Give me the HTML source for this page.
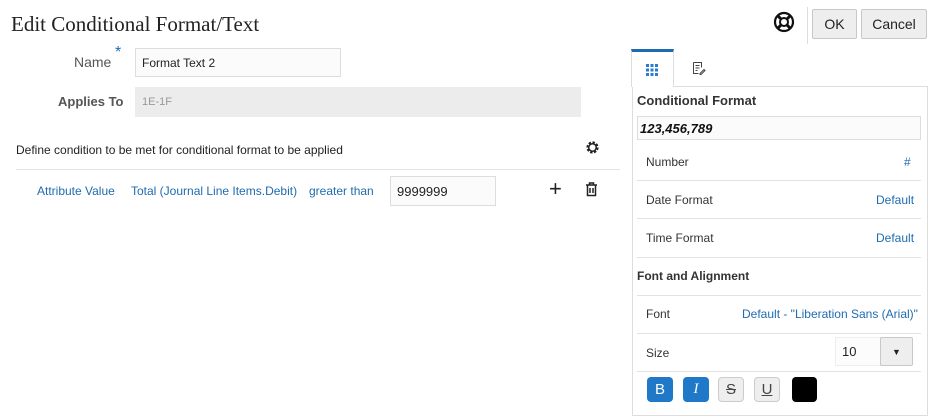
<!DOCTYPE html>
<html><head><style>
body{margin:0;width:931px;height:408px;background:#fff;font-family:"Liberation Sans",sans-serif;position:relative;overflow:hidden;color:#333}
.a{position:absolute}
.t{font-size:12px}
.lk{color:#1f6bb0}
.inp{position:absolute;border:1px solid #ddd;background:#fbfbfb;box-sizing:border-box;font-size:12px;padding-left:6px;display:flex;align-items:center}
.hr{position:absolute;height:1px;background:#e2e2e2}
.btn{position:absolute;border:1px solid #c8c8c8;background:#eee;border-radius:2px;box-sizing:border-box;font-size:14px;display:flex;align-items:center;justify-content:center;color:#222}
.fb{position:absolute;top:377px;width:26px;height:25px;border-radius:4px;box-sizing:border-box;display:flex;align-items:center;justify-content:center;font-size:15px}
</style></head><body>
<div class="a" style="left:11px;top:12px;font-family:'Liberation Serif',serif;font-size:21px;color:#222">Edit Conditional Format/Text</div>
<div class="a t" style="left:74px;top:54px;font-size:14px;color:#555">Name</div>
<div class="a" style="left:115px;top:44px;color:#1f6bb0;font-size:16px">*</div>
<div class="inp" style="left:135px;top:48px;width:206px;height:29px;color:#222">Format Text 2</div>
<div class="a" style="left:58px;top:94px;font-size:13px;font-weight:bold;color:#555">Applies To</div>
<div class="inp" style="left:135px;top:87px;width:446px;height:30px;background:#ececec;border-color:#ececec;color:#999;font-size:11px">1E-1F</div>
<div class="a t" style="left:16px;top:143px;color:#222">Define condition to be met for conditional format to be applied</div>
<svg class="a" style="left:585px;top:140px" width="15" height="15" viewBox="0 0 16 16"><circle cx="8" cy="8" r="5" fill="none" stroke="#222" stroke-width="3" stroke-dasharray="2.4 1.5"/><circle cx="8" cy="8" r="4" fill="none" stroke="#222" stroke-width="1.6"/></svg>
<div class="hr" style="left:16px;top:169px;width:604px"></div>
<div class="a t lk" style="left:37px;top:184px">Attribute Value</div>
<div class="a t lk" style="left:131px;top:184px">Total (Journal Line Items.Debit)</div>
<div class="a t lk" style="left:309px;top:184px">greater than</div>
<div class="inp" style="left:390px;top:176px;width:106px;height:30px;font-size:13px;color:#222">9999999</div>
<div class="a" style="left:549px;top:178px;font-size:22px;color:#222;line-height:22px">+</div>
<svg class="a" style="left:585px;top:182px" width="13" height="15" viewBox="0 0 13 15"><path d="M1 3h11M4.5 3V1h4v2M2.5 3.5v10h8v-10M5 6v5M8 6v5" fill="none" stroke="#222" stroke-width="1.5"/></svg>
<svg class="a" style="left:773px;top:11px" width="22" height="22" viewBox="0 0 22 22"><circle cx="11" cy="11" r="9" fill="none" stroke="#111" stroke-width="2.2"/><circle cx="11" cy="11" r="4" fill="none" stroke="#111" stroke-width="2"/><path d="M5 5l3 3M17 5l-3 3M5 17l3-3M17 17l-3-3" stroke="#111" stroke-width="3"/></svg>
<div class="a" style="left:807px;top:7px;width:1px;height:37px;background:#ddd"></div>
<div class="btn" style="left:812px;top:9px;width:45px;height:30px">OK</div>
<div class="btn" style="left:861px;top:9px;width:66px;height:30px">Cancel</div>
<div class="a" style="left:631px;top:49px;width:43px;height:38px;border:1px solid #ddd;border-top:3px solid #1f6bb0;border-bottom:none;box-sizing:border-box;background:#fff;z-index:2"></div>
<svg class="a" style="left:646px;top:64px;z-index:3" width="12" height="12" viewBox="0 0 12 12" fill="#2a7bd0"><rect x="0" y="0" width="3" height="3"/><rect x="4.5" y="0" width="3" height="3"/><rect x="9" y="0" width="3" height="3"/><rect x="0" y="4.5" width="3" height="3"/><rect x="4.5" y="4.5" width="3" height="3"/><rect x="9" y="4.5" width="3" height="3"/><rect x="0" y="9" width="3" height="3"/><rect x="4.5" y="9" width="3" height="3"/><rect x="9" y="9" width="3" height="3"/></svg>
<svg class="a" style="left:692px;top:61px" width="14" height="14" viewBox="0 0 14 14"><path d="M1.5 1.5h8v5M1.5 1.5v11h5M3.5 4.5h4M3.5 7h4M3.5 9.5h2M8 12.5l4-4 1 1-4 4h-1z" fill="none" stroke="#444" stroke-width="1"/></svg>
<div class="a" style="left:632px;top:86px;width:296px;height:330px;border:1px solid #ddd;box-sizing:border-box"></div>
<div class="a" style="left:637px;top:93px;font-size:13px;font-weight:bold;color:#333">Conditional Format</div>
<div class="inp" style="left:637px;top:116px;width:284px;height:24px;font-weight:bold;font-style:italic;font-size:13px;color:#111;padding-left:2px">123,456,789</div>
<div class="a t" style="left:646px;top:155px">Number</div><div class="a t lk" style="left:904px;top:155px">#</div>
<div class="hr" style="left:637px;top:180px;width:284px"></div>
<div class="a t" style="left:646px;top:193px">Date Format</div><div class="a t lk" style="left:876px;top:193px">Default</div>
<div class="hr" style="left:637px;top:218px;width:284px"></div>
<div class="a t" style="left:646px;top:231px">Time Format</div><div class="a t lk" style="left:876px;top:231px">Default</div>
<div class="hr" style="left:637px;top:257px;width:284px"></div>
<div class="a t" style="left:637px;top:269px;font-weight:bold">Font and Alignment</div>
<div class="hr" style="left:637px;top:295px;width:284px"></div>
<div class="a t" style="left:646px;top:307px">Font</div><div class="a t lk" style="left:742px;top:307px">Default - "Liberation Sans (Arial)"</div>
<div class="hr" style="left:637px;top:333px;width:284px"></div>
<div class="a t" style="left:646px;top:346px">Size</div>
<div class="inp" style="left:835px;top:337px;width:46px;height:29px;font-size:13px;color:#222;border-color:#eee;background:#fcfcfc">10</div>
<div class="btn" style="left:880px;top:337px;width:33px;height:29px;font-size:9px">▼</div>
<div class="hr" style="left:637px;top:371px;width:284px"></div>
<div class="fb" style="left:647px;background:#1f78c8;color:#fff">B</div>
<div class="fb" style="left:683px;background:#1f78c8;color:#fff;font-style:italic;font-family:'Liberation Serif',serif">I</div>
<div class="fb" style="left:718px;background:#eee;border:1px solid #ccc;color:#444;text-decoration:line-through">S</div>
<div class="fb" style="left:754px;background:#eee;border:1px solid #ccc;color:#444;text-decoration:underline">U</div>
<div class="fb" style="left:792px;background:#000;width:25px"></div>
</body></html>
